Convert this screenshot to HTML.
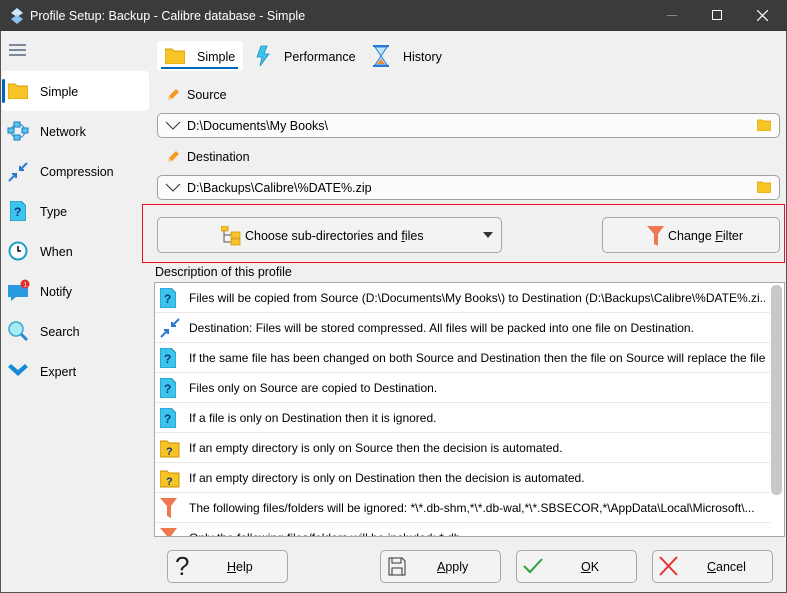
<!DOCTYPE html>
<html><head><meta charset="utf-8"><style>
*{box-sizing:border-box;margin:0;padding:0}
body{width:787px;height:593px;background:#f0f0f0;font-family:"Liberation Sans",sans-serif;font-size:12.5px;color:#000;position:relative;overflow:hidden}
.a{position:absolute}
.title{left:0;top:0;width:787px;height:31px;background:#3b3b3b;color:#fff;font-size:12.5px}
.frame{left:0;top:31px;width:787px;height:562px;border:1px solid #555;border-top:none}
.side{white-space:nowrap}
.combo{left:157px;width:623px;height:25px;background:#fbfbfb;border:1px solid #a0a0a0;border-radius:5px}
.btn{background:#f3f3f3;border:1px solid #a8a8a8;border-radius:5px;text-align:center}
.row{left:155px;width:615px;height:30px;border-bottom:1px solid #e8e8e8;white-space:nowrap;overflow:hidden;font-size:12px}
.row span{position:absolute;left:34px;top:8px;width:576px;overflow:hidden;text-overflow:clip}
.row svg{position:absolute;left:5px;top:5px}
</style></head><body>
<div class="a title">
 <svg class="a" style="left:10px;top:8px" width="14" height="16" viewBox="0 0 14 16"><path d="M7 0L13 5 7 9 1 5Z" fill="#cfe6ff"/><path d="M7 7L13 11 7 16 1 11Z" fill="#8ec2f0"/></svg>
 <div class="a" style="left:30px;top:9px">Profile Setup: Backup - Calibre database - Simple</div>
 <div class="a" style="left:667px;top:15px;width:10px;height:1px;background:#888"></div>
 <div class="a" style="left:712px;top:10px;width:10px;height:10px;border:1px solid #fff"></div>
 <svg class="a" style="left:757px;top:10px" width="11" height="11"><path d="M0 0L11 11M11 0L0 11" stroke="#fff" stroke-width="1.2"/></svg>
</div>
<div class="a frame"></div>
<!-- sidebar -->
<div class="a" style="left:9px;top:44px;width:17px;height:2px;background:#7a8a9a;box-shadow:0 5px 0 #7a8a9a,0 10px 0 #7a8a9a"></div>
<div class="a" style="left:2px;top:71px;width:147px;height:40px;background:#fff;border-radius:4px"></div>
<div class="a" style="left:2px;top:79px;width:3px;height:24px;background:#0067c0;border-radius:2px"></div>
<svg class="a" style="left:8px;top:82px" width="20" height="17"><path d="M0 2h7l2 2h11v13H0z" fill="#f7c427" stroke="#d9a000"/></svg>
<div class="a side" style="left:40px;top:85px">Simple</div>
<svg class="a" style="left:7px;top:121px" width="22" height="20"><circle cx="11" cy="10" r="7" fill="none" stroke="#2a8ad0"/><rect x="7" y="1" width="6" height="5" fill="#5ac8f0" stroke="#1a7ac0"/><rect x="1" y="7" width="6" height="5" fill="#5ac8f0" stroke="#1a7ac0"/><rect x="15" y="7" width="6" height="5" fill="#5ac8f0" stroke="#1a7ac0"/><rect x="7" y="14" width="6" height="5" fill="#5ac8f0" stroke="#1a7ac0"/></svg>
<div class="a side" style="left:40px;top:125px">Network</div>
<svg class="a" style="left:8px;top:162px" width="20" height="20"><path d="M19 1L12 8M12 4v4h4M1 19l7-7M8 16v-4H4" stroke="#2a7ad0" stroke-width="2" fill="none"/></svg>
<div class="a side" style="left:40px;top:165px">Compression</div>
<svg class="a" style="left:10px;top:201px" width="16" height="20"><path d="M0 0h11l5 5v15H0z" fill="#3cc4ec" stroke="#1a90c0"/><text x="4" y="15" font-size="12" font-weight="bold" fill="#0a3a80" font-family="Liberation Sans">?</text></svg>
<div class="a side" style="left:40px;top:205px">Type</div>
<svg class="a" style="left:8px;top:241px" width="20" height="20"><circle cx="10" cy="10" r="8.5" fill="#fff" stroke="#1ca0c8" stroke-width="2"/><path d="M10 5v5h3" stroke="#000" stroke-width="1.5" fill="none"/></svg>
<div class="a side" style="left:40px;top:245px">When</div>
<svg class="a" style="left:7px;top:279px" width="24" height="24"><path d="M1 6h20v12H9l-5 4v-4H1z" fill="#2a9ae0"/><circle cx="18" cy="5" r="4.5" fill="#e03030"/><text x="16.5" y="7.5" font-size="6" fill="#fff" font-family="Liberation Sans">1</text></svg>
<div class="a side" style="left:40px;top:285px">Notify</div>
<svg class="a" style="left:7px;top:320px" width="22" height="22"><circle cx="9" cy="9" r="7" fill="#a8ecf8" stroke="#3aa8d0" stroke-width="1.5"/><path d="M14 14l6 6" stroke="#2a8ac8" stroke-width="3"/></svg>
<div class="a side" style="left:40px;top:325px">Search</div>
<svg class="a" style="left:7px;top:363px" width="22" height="16"><path d="M1 4l10 9 10-9-3-3-7 6-7-6z" fill="#1a8ad8"/></svg>
<div class="a side" style="left:40px;top:365px">Expert</div>
<!-- tabs -->
<div class="a" style="left:157px;top:41px;width:86px;height:30px;background:#fff;border-radius:4px"></div>
<div class="a" style="left:161px;top:67px;width:77px;height:2px;background:#0067c0"></div>
<svg class="a" style="left:165px;top:47px" width="20" height="17"><path d="M0 2h7l2 2h11v13H0z" fill="#f7c427" stroke="#d9a000"/></svg>
<div class="a" style="left:197px;top:50px">Simple</div>
<svg class="a" style="left:256px;top:45px" width="14" height="22"><path d="M5 1L1 12h5l-2 9 9-12H8l3-8z" fill="#3cc4ec" stroke="#1a90c0" stroke-width=".8"/></svg>
<div class="a" style="left:284px;top:50px">Performance</div>
<svg class="a" style="left:372px;top:45px" width="18" height="22"><rect x="1" y="0" width="16" height="2" fill="#2a7ad0"/><rect x="1" y="20" width="16" height="2" fill="#2a7ad0"/><path d="M3 2h12L9 11l6 9H3l6-9z" fill="#bde8f8" stroke="#2a7ad0"/><path d="M5 19h8l-4-5z" fill="#f08a30"/></svg>
<div class="a" style="left:403px;top:50px">History</div>
<!-- source -->
<svg class="a" style="left:166px;top:88px" width="14" height="14"><path d="M2 12l1-4 7-7 3 3-7 7z" fill="#f59a20"/><path d="M2 12l1-4 3 3z" fill="#f8d0a0"/></svg>
<div class="a" style="left:187px;top:88px">Source</div>
<div class="a combo" style="top:113px"></div>
<svg class="a" style="left:165px;top:121px" width="16" height="9"><path d="M1 1l7 7 7-7" stroke="#333" fill="none"/></svg>
<div class="a" style="left:187px;top:119px">D:\Documents\My Books\</div>
<svg class="a" style="left:757px;top:119px" width="14" height="12"><path d="M0 1h5l1 1h8v10H0z" fill="#f7c427" stroke="#d9a000" stroke-width=".7"/></svg>
<svg class="a" style="left:166px;top:150px" width="14" height="14"><path d="M2 12l1-4 7-7 3 3-7 7z" fill="#f59a20"/><path d="M2 12l1-4 3 3z" fill="#f8d0a0"/></svg>
<div class="a" style="left:187px;top:150px">Destination</div>
<div class="a combo" style="top:175px"></div>
<svg class="a" style="left:165px;top:183px" width="16" height="9"><path d="M1 1l7 7 7-7" stroke="#333" fill="none"/></svg>
<div class="a" style="left:187px;top:181px">D:\Backups\Calibre\%DATE%.zip</div>
<svg class="a" style="left:757px;top:181px" width="14" height="12"><path d="M0 1h5l1 1h8v10H0z" fill="#f7c427" stroke="#d9a000" stroke-width=".7"/></svg>
<!-- red box -->
<div class="a" style="left:142px;top:204px;width:643px;height:59px;border:1px solid #e81123"></div>
<div class="a btn" style="left:157px;top:217px;width:345px;height:36px"></div>
<svg class="a" style="left:221px;top:226px" width="24" height="20"><path d="M3 4v12h8M3 9h8" stroke="#555" fill="none"/><rect x="0" y="0" width="7" height="5" fill="#f7c427" stroke="#c99000" stroke-width=".7"/><rect x="10" y="6" width="9" height="6" fill="#f7c427" stroke="#c99000" stroke-width=".7"/><rect x="10" y="13" width="9" height="6" fill="#f7c427" stroke="#c99000" stroke-width=".7"/></svg>
<div class="a" style="left:245px;top:229px">Choose sub-directories and <u>f</u>iles</div>
<svg class="a" style="left:483px;top:232px" width="10" height="6"><path d="M0 0h10L5 6z" fill="#333"/></svg>
<div class="a btn" style="left:602px;top:217px;width:178px;height:36px"></div>
<svg class="a" style="left:647px;top:226px" width="17" height="20"><path d="M0 0h17l-6 8v12l-4-2V8z" fill="#f07850"/></svg>
<div class="a" style="left:668px;top:229px">Change <u>F</u>ilter</div>
<div class="a" style="left:155px;top:265px">Description of this profile</div>
<!-- list -->
<div class="a" style="left:154px;top:282px;width:631px;height:255px;background:#fff;border:1px solid #a8a8a8;overflow:hidden">
 <div class="a" style="left:616px;top:2px;width:11px;height:210px;background:#c8c8c8;border-radius:5px"></div>
</div>
<div class="a" style="left:155px;top:283px;width:615px;height:253px;overflow:hidden">
 <div class="a row" style="left:0;top:0"><svg width="16" height="20"><path d="M0 0h11l5 5v15H0z" fill="#3cc4ec" stroke="#1a90c0"/><text x="4" y="15" font-size="12" font-weight="bold" fill="#0a3a80" font-family="Liberation Sans">?</text></svg><span>Files will be copied from Source (D:\Documents\My Books\) to Destination (D:\Backups\Calibre\%DATE%.zi...</span></div>
 <div class="a row" style="left:0;top:30px"><svg width="20" height="20"><path d="M19 1L12 8M12 4v4h4M1 19l7-7M8 16v-4H4" stroke="#2a7ad0" stroke-width="2" fill="none"/></svg><span>Destination: Files will be stored compressed. All files will be packed into one file on Destination.</span></div>
 <div class="a row" style="left:0;top:60px"><svg width="16" height="20"><path d="M0 0h11l5 5v15H0z" fill="#3cc4ec" stroke="#1a90c0"/><text x="4" y="15" font-size="12" font-weight="bold" fill="#0a3a80" font-family="Liberation Sans">?</text></svg><span>If the same file has been changed on both Source and Destination then the file on Source will replace the file...</span></div>
 <div class="a row" style="left:0;top:90px"><svg width="16" height="20"><path d="M0 0h11l5 5v15H0z" fill="#3cc4ec" stroke="#1a90c0"/><text x="4" y="15" font-size="12" font-weight="bold" fill="#0a3a80" font-family="Liberation Sans">?</text></svg><span>Files only on Source are copied to Destination.</span></div>
 <div class="a row" style="left:0;top:120px"><svg width="16" height="20"><path d="M0 0h11l5 5v15H0z" fill="#3cc4ec" stroke="#1a90c0"/><text x="4" y="15" font-size="12" font-weight="bold" fill="#0a3a80" font-family="Liberation Sans">?</text></svg><span>If a file is only on Destination then it is ignored.</span></div>
 <div class="a row" style="left:0;top:150px"><svg width="20" height="20"><path d="M0 3h7l2 2h10v14H0z" fill="#f7c427" stroke="#c99000"/><text x="6" y="17" font-size="11" font-weight="bold" fill="#0a3a80" font-family="Liberation Sans">?</text></svg><span>If an empty directory is only on Source then the decision is automated.</span></div>
 <div class="a row" style="left:0;top:180px"><svg width="20" height="20"><path d="M0 3h7l2 2h10v14H0z" fill="#f7c427" stroke="#c99000"/><text x="6" y="17" font-size="11" font-weight="bold" fill="#0a3a80" font-family="Liberation Sans">?</text></svg><span>If an empty directory is only on Destination then the decision is automated.</span></div>
 <div class="a row" style="left:0;top:210px"><svg width="18" height="22"><path d="M0 0h17l-6 8v12l-4-2V8z" fill="#f07850"/></svg><span>The following files/folders will be ignored: *\*.db-shm,*\*.db-wal,*\*.SBSECOR,*\AppData\Local\Microsoft\...</span></div>
 <div class="a row" style="left:0;top:240px"><svg width="18" height="22"><path d="M0 0h17l-6 8v12l-4-2V8z" fill="#f07850"/></svg><span>Only the following files/folders will be included: *.db</span></div>
</div>
<!-- bottom buttons -->
<div class="a btn" style="left:167px;top:550px;width:121px;height:33px"></div>
<div class="a" style="left:175px;top:551px;font-size:26px;color:#222">?</div>
<div class="a" style="left:227px;top:560px"><u>H</u>elp</div>
<div class="a btn" style="left:380px;top:550px;width:121px;height:33px"></div>
<svg class="a" style="left:388px;top:557px" width="18" height="19"><path d="M1 1h13l3 3v14H1z" fill="none" stroke="#333"/><rect x="4" y="1" width="9" height="5" fill="none" stroke="#333"/><rect x="4" y="11" width="10" height="7" fill="none" stroke="#333"/></svg>
<div class="a" style="left:437px;top:560px"><u>A</u>pply</div>
<div class="a btn" style="left:516px;top:550px;width:121px;height:33px"></div>
<svg class="a" style="left:523px;top:558px" width="20" height="16"><path d="M1 8l6 6L19 1" stroke="#2aa040" stroke-width="2" fill="none"/></svg>
<div class="a" style="left:581px;top:560px"><u>O</u>K</div>
<div class="a btn" style="left:652px;top:550px;width:121px;height:33px"></div>
<svg class="a" style="left:659px;top:556px" width="19" height="20"><path d="M1 1l17 18M18 1L1 19" stroke="#e83030" stroke-width="2"/></svg>
<div class="a" style="left:707px;top:560px"><u>C</u>ancel</div>
</body></html>
